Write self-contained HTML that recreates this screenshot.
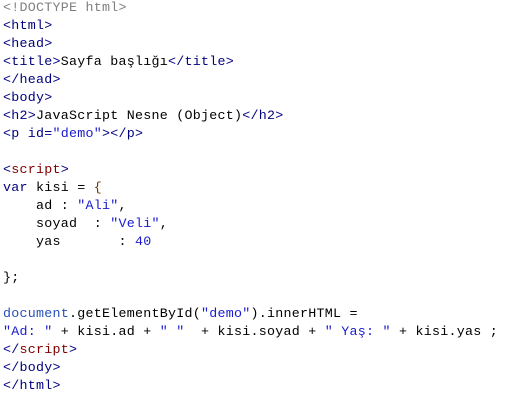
<!DOCTYPE html>
<html><head><style>
body{margin:0;background:#fff;width:508px;height:402px;overflow:hidden}
pre{margin:0;position:absolute;left:3px;top:0px;font-family:"Liberation Mono",monospace;font-size:13.33px;letter-spacing:0.25px;line-height:18px;color:#000}
.t{color:#000080}.g{color:#808080}.m{color:#800000}.s{color:#1a1ad0}.k{color:#000080}.d{color:#2850b8}.b{color:#6a3a00}
</style></head><body><pre><span class="g">&lt;!DOCTYPE html&gt;</span>
<span class="t">&lt;html&gt;</span>
<span class="t">&lt;head&gt;</span>
<span class="t">&lt;title&gt;</span>Sayfa başlığı<span class="t">&lt;/title&gt;</span>
<span class="t">&lt;/head&gt;</span>
<span class="t">&lt;body&gt;</span>
<span class="t">&lt;h2&gt;</span>JavaScript Nesne (Object)<span class="t">&lt;/h2&gt;</span>
<span class="t">&lt;p id=</span><span class="s">"demo"</span><span class="t">&gt;&lt;/p&gt;</span>

<span class="t">&lt;</span><span class="m">script</span><span class="t">&gt;</span>
<span class="k">var</span> kisi = <span class="b">{</span>
    ad : <span class="s">"Ali"</span>,
    soyad  : <span class="s">"Veli"</span>,
    yas       : <span class="s">40</span>

};

<span class="d">document</span>.getElementById(<span class="s">"demo"</span>).innerHTML =
<span class="s">"Ad: "</span> + kisi.ad + <span class="s">" "</span>  + kisi.soyad + <span class="s">" Yaş: "</span> + kisi.yas ;
<span class="t">&lt;/</span><span class="m">script</span><span class="t">&gt;</span>
<span class="t">&lt;/body&gt;</span>
<span class="t">&lt;/html&gt;</span></pre></body></html>
